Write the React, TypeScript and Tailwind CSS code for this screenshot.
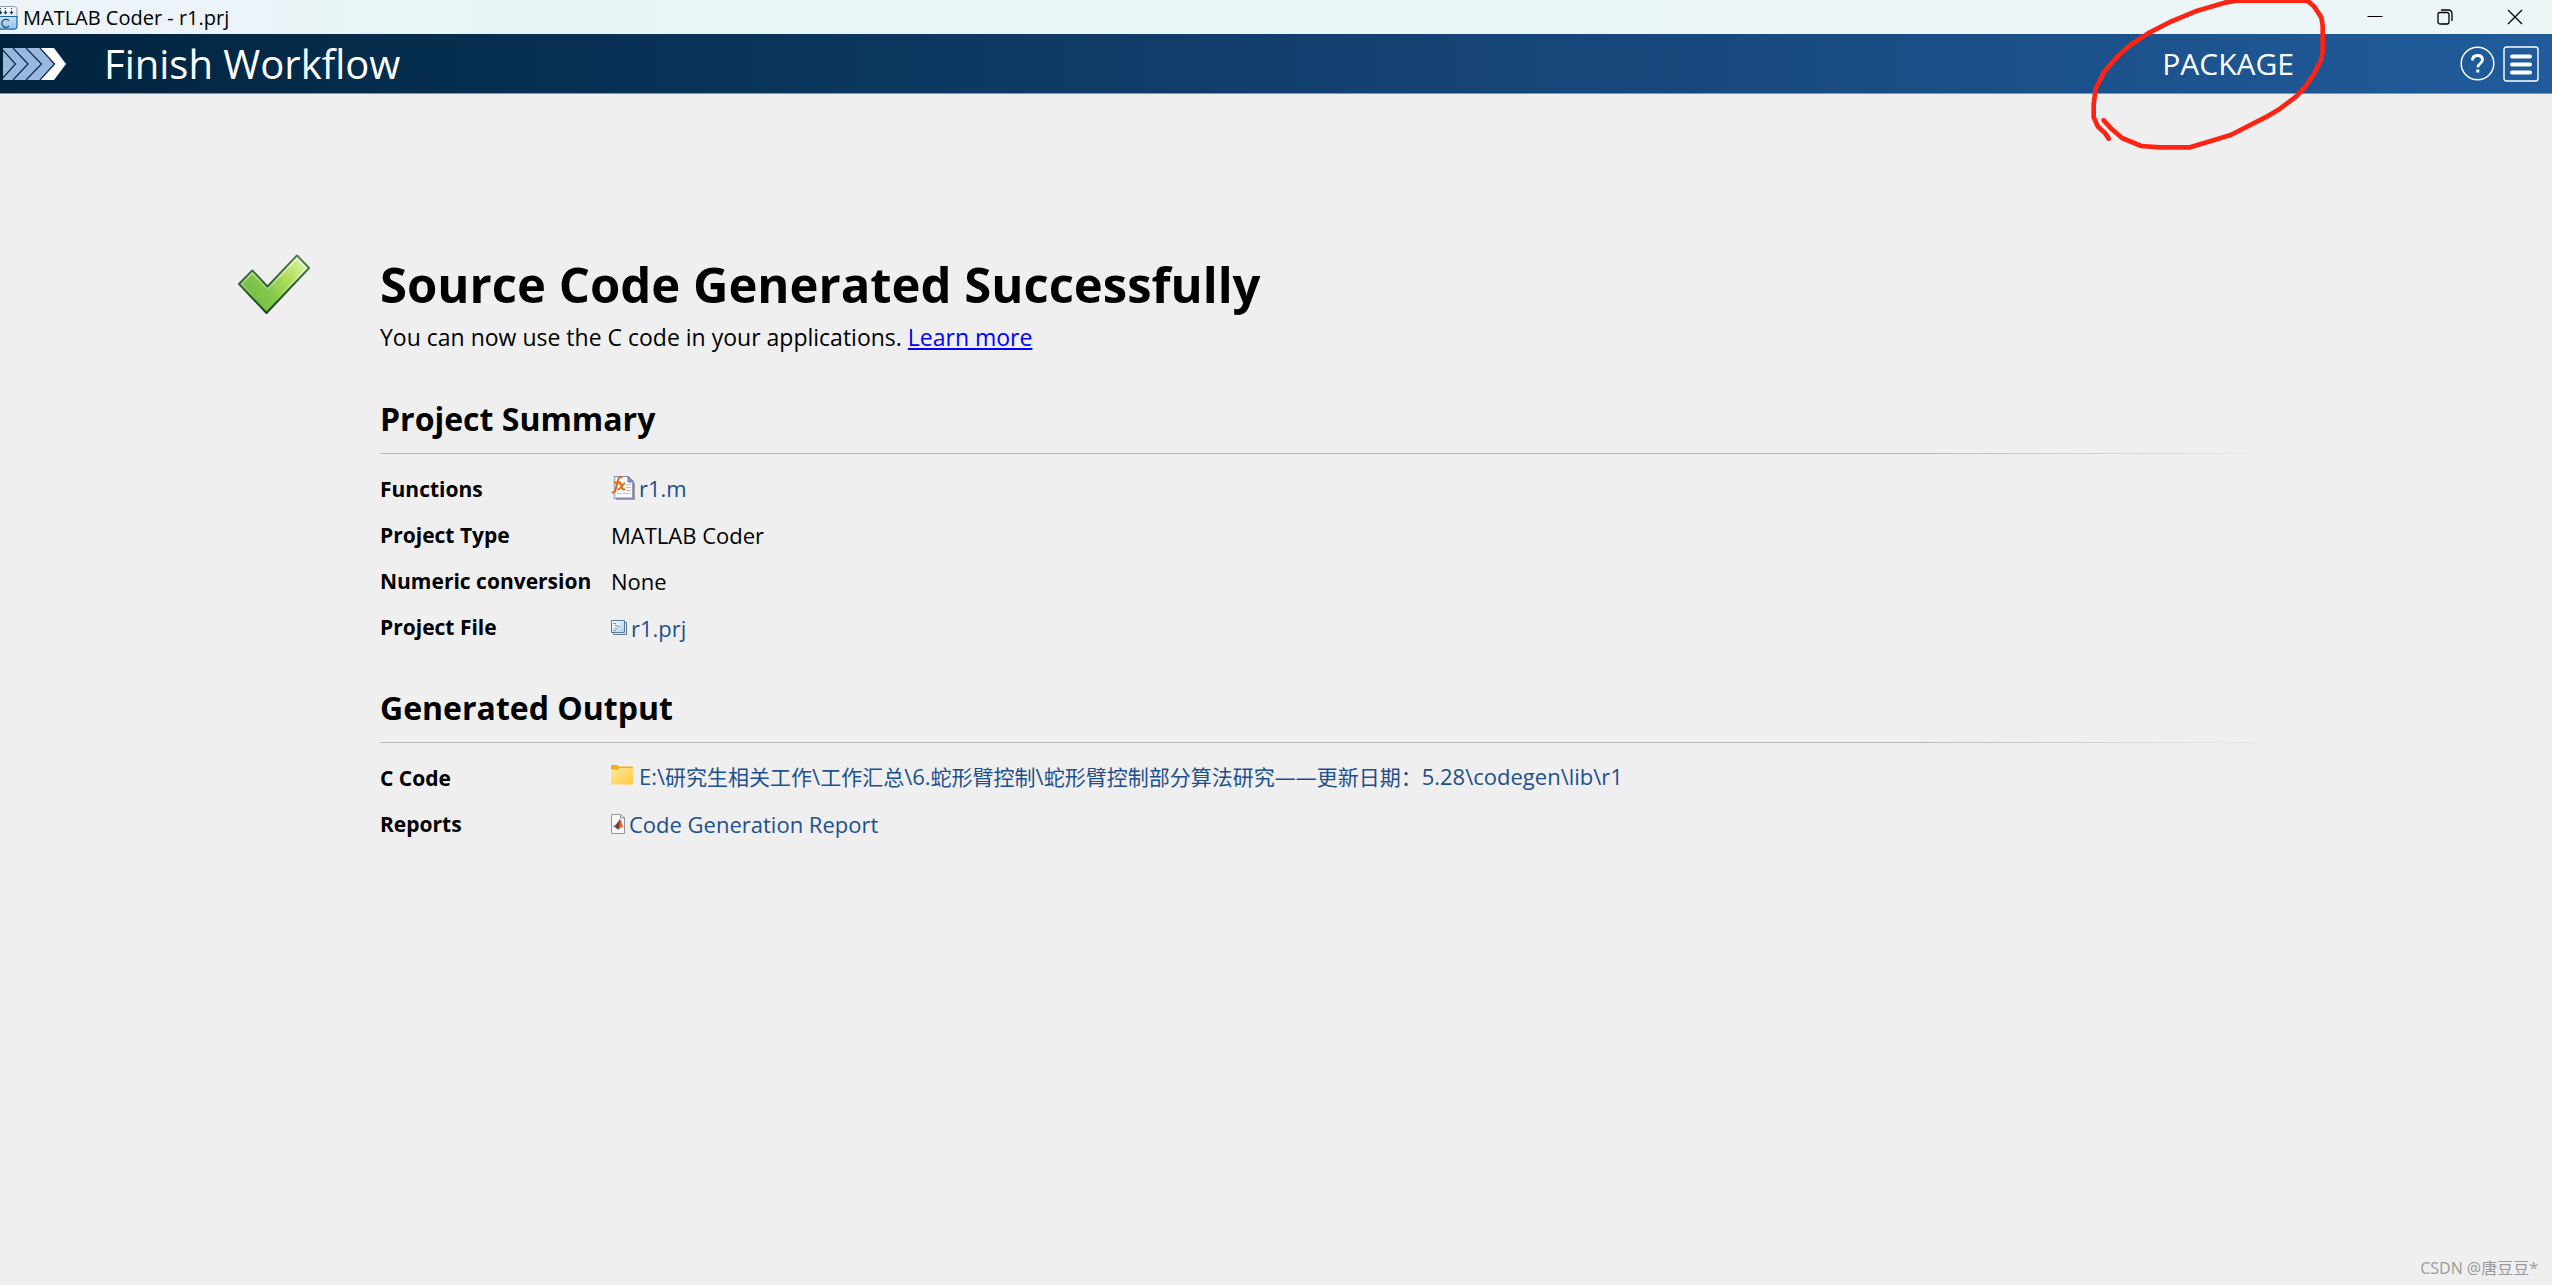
import type { ReactNode } from "react";

function CoderAppIcon() {
  return (
    <svg width="18" height="24" viewBox="0 0 18 24" aria-hidden="true">
      <defs>
        <linearGradient id="appTop" x1="0" y1="0" x2="0" y2="1">
          <stop offset="0" stopColor="#ffffff" />
          <stop offset="1" stopColor="#e3e6ea" />
        </linearGradient>
        <linearGradient id="appBottom" x1="0" y1="0" x2="0" y2="1">
          <stop offset="0" stopColor="#c4e2f8" />
          <stop offset="1" stopColor="#8fc3f3" />
        </linearGradient>
      </defs>
      <path d="M-3 .6H14a3 3 0 0 1 3 3V11H-3z" fill="url(#appTop)" stroke="#8b9299" />
      <path d="M-3 10.5H17v10a2.6 2.6 0 0 1-2.6 2.6H-3z" fill="url(#appBottom)" stroke="#1d639f" strokeWidth="1.2" />
      <path d="M.5 2v1M5.500 2v1M11.500 2v1M.5 4.500v3M5.500 4.500v3M11.500 4.500v3" stroke="#123e6b" strokeWidth="1.200" />
      <path d="M-1.500 6h4L.5 8.600zM3.500 6h4l-2 2.600zM9.500 6h4l-2 2.600z" fill="#123e6b" />
      <path d="M9 14.800a4 4 0 1 0 0 5" fill="none" stroke="#3c4650" strokeWidth="1.200" />
    </svg>
  );
}

function ChevronSteps() {
  return (
    <svg width="66" height="32" viewBox="0 0 66 32" aria-hidden="true">
      <path d="M36 0h15l12 16-12 16H36l16-16z" fill="#ffffff" />
      <path d="M0 0h37l14.500 16L37 32H0z" fill="#9ab7e0" />
      <path d="M-2 0l14.500 16L-2 32M10 0l15 16-15 16M23 0l15.500 16L23 32M37 0l14.500 16L37 32" fill="none" stroke="#10304f" strokeWidth="1.300" />
    </svg>
  );
}

function CheckMark() {
  return (
    <svg width="72" height="60" viewBox="0 0 72 60" aria-hidden="true">
      <defs>
        <linearGradient id="checkFill" x1="0" y1="0.700" x2="1" y2="0.100">
          <stop offset="0" stopColor="#6fb944" />
          <stop offset="0.350" stopColor="#86c84c" />
          <stop offset="0.650" stopColor="#b3de5c" />
          <stop offset="1" stopColor="#dff3b4" />
        </linearGradient>
        <linearGradient id="checkLine" x1="0" y1="1" x2="0" y2="0">
          <stop offset="0" stopColor="#12491f" />
          <stop offset="1" stopColor="#4d7d45" />
        </linearGradient>
        <linearGradient id="checkGlow" x1="0" y1="1" x2="0" y2="0">
          <stop offset="0.200" stopColor="#ffffff" stopOpacity="0" />
          <stop offset="1" stopColor="#ffffff" stopOpacity="0.750" />
        </linearGradient>
      </defs>
      <path d="M1 30L14.300 16.500 29.500 32.500 59 1.500 71 14 28.500 59z" fill="url(#checkFill)" stroke="url(#checkLine)" strokeWidth="2" strokeLinejoin="round" />
      <path d="M3.500 30L14.300 19 29.500 35 59 4.200 68.500 14 28.500 56.200z" fill="none" stroke="url(#checkGlow)" strokeWidth="1.600" />
    </svg>
  );
}

function FunctionFileIcon() {
  return (
    <svg width="24" height="24" viewBox="0 0 24 24" aria-hidden="true">
      <path d="M5 23.500h18.500V7" fill="none" stroke="#a8a48c" strokeWidth="1.500" />
      <path d="M3.500.5h13.500l5.500 5.500v16.500h-19z" fill="#f8faff" stroke="#7d87b5" strokeWidth="1.200" />
      <path d="M3.500.5v22" stroke="#9fb6e6" strokeWidth="1.500" />
      <path d="M17 .5v5.500h5.500z" fill="#8b93c4" stroke="#6d74a8" />
      <path d="M22 7v15.300H5" fill="none" stroke="#8187b8" strokeWidth="1.600" />
      <path d="M15 8.500h5M15 11.500h5M15 14.500h5M6 17.500h4.500M12 17.500h8" stroke="#b9bfd0" />
      <path d="M11.500 1.500c-3-1.300-4.200.5-4.900 4L4.500 14C4 16 2.500 17 .8 16.200M3 6.500h7" fill="none" stroke="#de6a12" strokeWidth="2" />
      <path d="M7.500 7.500c2-.5 2.700.8 3.200 3.200.5 2.500 1.200 3.500 3.500 2.300M14 7.200c-2.500.5-4.500 6.300-7.500 6.500" fill="none" stroke="#de6a12" strokeWidth="1.900" />
    </svg>
  );
}

function ProjectFileIcon() {
  return (
    <svg width="16" height="16" viewBox="0 0 16 16" aria-hidden="true">
      <defs>
        <linearGradient id="prjFill" x1="0" y1="0" x2="1" y2="1">
          <stop offset="0" stopColor="#ffffff" />
          <stop offset="1" stopColor="#a9d0e4" />
        </linearGradient>
      </defs>
      <path d="M2.500 2.500h13v12h-13z" fill="#dce9f0" stroke="#587a94" />
      <path d="M.5.5h13v12H.5z" fill="url(#prjFill)" stroke="#587a94" />
      <path d="M2 3.500h3M4 5.500h2M6 6.500h3M4 8.500h2M2 10.500h3" stroke="#8297a5" />
    </svg>
  );
}

function FolderIcon() {
  return (
    <svg width="24" height="24" viewBox="0 0 24 24" aria-hidden="true">
      <defs>
        <linearGradient id="folderFill" x1="0" y1="0" x2="1" y2="1">
          <stop offset="0" stopColor="#ffe79a" />
          <stop offset="1" stopColor="#ffcb3d" />
        </linearGradient>
      </defs>
      <path d="M0 0h6.500l1.500 1.500H22V5H0z" fill="#f3ae16" />
      <path d="M0 4.500h6.500l2-1.500H22V19.500H0z" fill="url(#folderFill)" />
    </svg>
  );
}

function ReportIcon() {
  return (
    <svg width="14" height="20" viewBox="0 0 14 20" aria-hidden="true">
      <path d="M.5.5h9l4 3v16H.5z" fill="#f7f8f9" stroke="#8e9499" />
      <path d="M9.500.5v3.500h4" fill="#dfe3e6" stroke="#8e9499" />
      <path d="M2 12l4-2 2.500 1-2.500 4z" fill="#3f78b5" />
      <path d="M5.500 10L9 5l1.500 4-3.500 7-1.800-3z" fill="#8c2c1a" />
      <path d="M9 5c1 2 2 6 3.500 8l-2.500.5L7.500 16c.5-4 1-7 1.500-11z" fill="#e8642c" />
    </svg>
  );
}

function RedCircle() {
  return (
    <svg className="pointer-events-none absolute top-0 right-0" width="492" height="160" viewBox="0 0 1476 480" fill="none" stroke="#ff2314" strokeWidth="14" strokeLinecap="round" strokeLinejoin="round" aria-hidden="true">
      <path d="M146 416L134 398 114 380 101 352V312L107 266 133 215 168 174 207 138 264 100 330 66 412 32 494 8 530 2H742L762 19 784 52 788 76V156L783 180 762 222 736 260 708 290 660 326 620 350 512 405 460 421 390 442H300L244 438 186 414 156 388 131 361" />
    </svg>
  );
}

function Row({ label, children }: { label: string; children: ReactNode }) {
  return (
    <tr className="h-[46px]">
      <th scope="row" className="w-[231px] p-0 text-left text-[21px] font-bold">{label}</th>
      <td className="p-0">{children}</td>
    </tr>
  );
}

function FileLink({ icon, children }: { icon: ReactNode; children: ReactNode }) {
  return (
    <a href="#" className="inline-flex items-center gap-1 text-[#1d508c]">
      {icon}
      <span>{children}</span>
    </a>
  );
}

/* Sets runs of Chinese text slightly smaller than the Latin text around them. */
function MixedText({ text }: { text: string }) {
  return text.split(/([\u2014\u3000-\uffef]+)/).map((part, i) =>
    i % 2 === 1 ? <span key={i} className="text-[21px]">{part}</span> : part,
  );
}

function Section({ title, children }: { title: string; children: ReactNode }) {
  return (
    <section>
      <h2 className="text-[32px] leading-[44px] font-bold">{title}</h2>
      <div className="mt-3 h-px bg-linear-to-r from-[#b8b8b8] from-80% to-[#efefef]" />
      <table className="mt-3 border-collapse text-[22px] leading-[30px]">
        <tbody>{children}</tbody>
      </table>
    </section>
  );
}

export default function App() {
  return (
    <div className="relative flex min-h-screen flex-col bg-[#efefef] font-['Open_Sans','Noto_Sans_CJK_SC',sans-serif] text-black">
      <div className="flex h-[34px] items-center justify-between bg-linear-to-r from-[#edf3fa] via-[#e8f5f6] via-20% to-[#edf5f7]">
        <div className="flex items-center gap-[5px] pt-0.5">
          <CoderAppIcon />
          <span className="text-[20px] leading-[28px]">MATLAB Coder - r1.prj</span>
        </div>
        <div className="flex items-center pr-0.5">
          <button type="button" aria-label="Minimize" className="flex h-[34px] w-[70px] items-center justify-center">
            <svg width="16" height="16" viewBox="0 0 16 16" stroke="#000"><path d="M.5 7.500h15" /></svg>
          </button>
          <button type="button" aria-label="Restore" className="flex h-[34px] w-[70px] items-center justify-center">
            <svg width="16" height="16" viewBox="0 0 16 16" fill="none" stroke="#000" strokeWidth="1.300"><rect x="1" y="3.500" width="11" height="11.500" rx="2" /><path d="M4 1h7.500A3.500 3.500 0 0 1 15 4.500V12" /></svg>
          </button>
          <button type="button" aria-label="Close" className="flex h-[34px] w-[70px] items-center justify-center">
            <svg width="16" height="16" viewBox="0 0 16 16" stroke="#000" strokeWidth="1.300"><path d="M1 1l14 14M15 1L1 15" /></svg>
          </button>
        </div>
      </div>

      <header className="flex h-[60px] items-center justify-between border-b border-[#8f9499] bg-linear-to-r from-[#01243e] via-[#164578] via-60% to-[#205c9b] pr-[13px] pl-[3px] text-white">
        <div className="flex items-center gap-[35px]">
          <ChevronSteps />
          <h1 className="text-[40px] leading-[56px]">Finish Workflow</h1>
        </div>
        <div className="flex items-center">
          <button type="button" className="mr-[166px] text-[30px] leading-[40px]">PACKAGE</button>
          <button type="button" aria-label="Help" className="mr-2">
            <svg width="35" height="35" viewBox="0 0 35 35" fill="none" stroke="#fff">
              <circle cx="17.500" cy="17.500" r="16.300" strokeWidth="1.500" />
              <path d="M12.500 14.500c0-3.200 2-5 5-5s5 1.700 5 4.300c0 3.700-4.600 3.700-4.600 7.400" strokeWidth="2.800" />
              <path d="M17.800 23.500v3" strokeWidth="3" />
            </svg>
          </button>
          <button type="button" aria-label="Menu">
            <svg width="36" height="36" viewBox="0 0 36 36" fill="none" stroke="#fff">
              <rect x="1" y="1" width="34" height="34" rx="2.500" strokeWidth="1.400" />
              <path d="M9 10.500h18M9 18.500h18M9 26.500h18" strokeWidth="4" strokeLinecap="round" />
            </svg>
          </button>
        </div>
      </header>

      <main className="flex flex-1 gap-[70px] pt-[152px] pr-[257px] pl-[238px]">
        <div className="shrink-0 pt-2">
          <CheckMark />
        </div>
        <div className="min-w-0 flex-1">
          <h2 className="text-[49px] leading-[76px] font-bold">Source Code Generated Successfully</h2>
          <p className="text-[23px] leading-[30px]">
            You can now use the C code in your applications.{" "}
            <a href="#" className="text-[#0000ff] underline">Learn more</a>
          </p>
          <div className="mt-[45px] flex flex-col gap-[36px]">
            <Section title="Project Summary">
              <Row label="Functions"><FileLink icon={<FunctionFileIcon />}>r1.m</FileLink></Row>
              <Row label="Project Type">MATLAB Coder</Row>
              <Row label="Numeric conversion">None</Row>
              <Row label="Project File"><FileLink icon={<ProjectFileIcon />}>r1.prj</FileLink></Row>
            </Section>
            <Section title="Generated Output">
              <Row label="C Code">
                <FileLink icon={<FolderIcon />}>
                  <MixedText text={"E:\\研究生相关工作\\工作汇总\\6.蛇形臂控制\\蛇形臂控制部分算法研究——更新日期：5.28\\codegen\\lib\\r1"} />
                </FileLink>
              </Row>
              <Row label="Reports"><FileLink icon={<ReportIcon />}>Code Generation Report</FileLink></Row>
            </Section>
          </div>
        </div>
      </main>

      <footer className="flex justify-end pr-[14px] pb-[6px]">
        <small className="text-[16px] leading-[22px] text-[#9a9a9a]">CSDN @唐豆豆*</small>
      </footer>

      <RedCircle />
    </div>
  );
}
